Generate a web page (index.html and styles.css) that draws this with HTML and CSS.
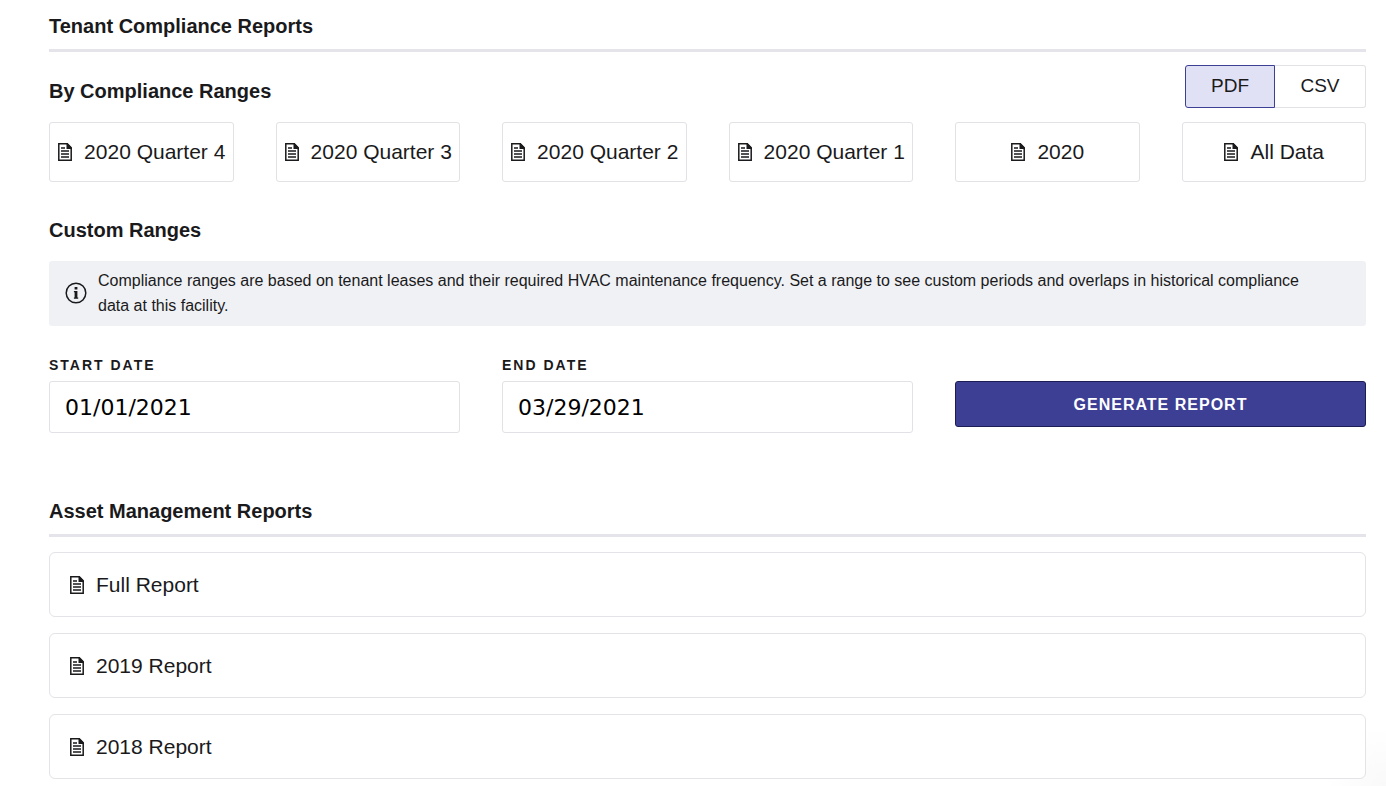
FILE: index.html
```html
<!DOCTYPE html>
<html lang="en">
<head>
<meta charset="utf-8">
<meta name="viewport" content="width=device-width, initial-scale=1">
<title>Reports</title>
<link rel="stylesheet" href="styles.css">
</head>
<body>
<svg class="sprite" aria-hidden="true">
  <symbol id="doc" viewBox="0 0 16 20">
    <path d="M1.8 1.8H10L14.2 6V18.2H1.8Z" fill="none" stroke="currentColor" stroke-width="1.5"/>
    <path d="M9.5 1H10.6L15 5.4V7H9.5Z" fill="currentColor"/>
    <path d="M4 6H8M4 9H12M4 12H12M4 15H12" fill="none" stroke="currentColor" stroke-width="1.4"/>
  </symbol>
</svg>
<main class="page">
  <section class="tenant">
    <h2 class="section-title">Tenant Compliance Reports</h2>
    <div class="range-head">
      <h3 class="subtitle">By Compliance Ranges</h3>
      <div class="toggle" role="group" aria-label="File format">
        <button type="button" class="toggle-option selected" aria-pressed="true">PDF</button>
        <button type="button" class="toggle-option" aria-pressed="false">CSV</button>
      </div>
    </div>
    <div class="ranges">
      <button type="button" class="range"><svg class="doc"><use href="#doc"/></svg><span>2020 Quarter 4</span></button>
      <button type="button" class="range"><svg class="doc"><use href="#doc"/></svg><span>2020 Quarter 3</span></button>
      <button type="button" class="range"><svg class="doc"><use href="#doc"/></svg><span>2020 Quarter 2</span></button>
      <button type="button" class="range"><svg class="doc"><use href="#doc"/></svg><span>2020 Quarter 1</span></button>
      <button type="button" class="range"><svg class="doc"><use href="#doc"/></svg><span>2020</span></button>
      <button type="button" class="range"><svg class="doc"><use href="#doc"/></svg><span>All Data</span></button>
    </div>
    <h3 class="subtitle custom-title">Custom Ranges</h3>
    <div class="info">
      <svg class="info-icon" viewBox="0 0 22 22" aria-hidden="true">
        <circle cx="11" cy="11" r="9.8" fill="none" stroke="currentColor" stroke-width="1.5"/>
        <path d="M9.6 5H12.4V7.5H9.6ZM8.9 9H12.4V15.4H13.2V16.8H8.9V15.4H9.6V10.3H8.9Z" fill="currentColor"/>
      </svg>
      <p class="info-text">Compliance ranges are based on tenant leases and their required HVAC maintenance frequency. Set a range to see custom periods and overlaps in historical compliance data at this facility.</p>
    </div>
    <form class="dates">
      <div class="field">
        <label class="label" for="start">START DATE</label>
        <input class="date" id="start" type="text" value="01/01/2021">
      </div>
      <div class="field">
        <label class="label" for="end">END DATE</label>
        <input class="date" id="end" type="text" value="03/29/2021">
      </div>
      <button type="button" class="generate">GENERATE REPORT</button>
    </form>
  </section>
  <section class="asset">
    <h2 class="section-title">Asset Management Reports</h2>
    <div class="reports">
      <a class="report" href="#full"><svg class="doc"><use href="#doc"/></svg><span>Full Report</span></a>
      <a class="report" href="#2019"><svg class="doc"><use href="#doc"/></svg><span>2019 Report</span></a>
      <a class="report" href="#2018"><svg class="doc"><use href="#doc"/></svg><span>2018 Report</span></a>
    </div>
  </section>
</main>
</body>
</html>
```
FILE: styles.css
```css
* {
  box-sizing: border-box;
}

body {
  margin: 0;
  background: #fff;
  color: #1a1a1c;
  font-family: "Liberation Sans", Arial, sans-serif;
}

button,
input {
  font: inherit;
  color: inherit;
  margin: 0;
}

.sprite {
  display: none;
}

.page {
  padding: 14px 20px 7px 49px;
  background: radial-gradient(circle at right bottom, #f9f9f9, #fff 60px);
}

.section-title,
.subtitle {
  margin: 0;
  font-size: 20px;
  line-height: 24px;
  font-weight: 700;
}

.section-title {
  padding-bottom: 11px;
  border-bottom: 3px solid #e4e4ea;
}

.range-head {
  display: flex;
  justify-content: space-between;
  align-items: center;
  margin-top: 13px;
}

.range-head .subtitle {
  padding-top: 8px;
}

.toggle {
  display: flex;
}

.toggle-option {
  width: 91px;
  height: 43px;
  padding: 0 0 2px;
  border: 1px solid #e1e1e6;
  border-left: 0;
  border-radius: 0 3px 3px 0;
  background: #fff;
  font-size: 19px;
}

.toggle-option.selected {
  width: 90px;
  border: 1px solid #3d3f94;
  border-radius: 3px 0 0 3px;
  background: #e1e1f6;
}

.ranges {
  display: grid;
  grid-template-columns: repeat(6, 1fr);
  gap: 42px;
  margin-top: 14px;
}

.range {
  display: flex;
  align-items: center;
  justify-content: center;
  gap: 11px;
  height: 60px;
  padding: 0;
  border: 1px solid #e1e1e6;
  border-radius: 3px;
  background: #fff;
  font-size: 21px;
  white-space: nowrap;
}

.doc {
  flex: none;
  width: 16px;
  height: 20px;
}

.custom-title {
  margin-top: 36px;
}

.info {
  display: flex;
  align-items: center;
  gap: 11px;
  margin-top: 19px;
  padding: 7px 42px 8px 16px;
  border-radius: 3px;
  background: #f0f1f4;
}

.info-icon {
  flex: none;
  width: 22px;
  height: 22px;
}

.info-text {
  margin: 0;
  font-size: 16px;
  line-height: 25px;
}

.dates {
  display: grid;
  grid-template-columns: repeat(3, 1fr);
  gap: 42px;
  margin-top: 30px;
}

.field {
  display: flex;
  flex-direction: column;
  gap: 7px;
}

.label {
  font-size: 14px;
  line-height: 18px;
  font-weight: 700;
  letter-spacing: 2px;
}

.date {
  width: 100%;
  height: 52px;
  padding: 0 15px;
  border: 1px solid #e1e1e6;
  border-radius: 3px;
  background: #fff;
  color: #000;
  font-family: "DejaVu Sans", sans-serif;
  font-size: 22px;
}

.generate {
  height: 46px;
  margin-top: 25px;
  padding: 2px 0 0;
  border: 1px solid #1d1d55;
  border-radius: 3px;
  background: #3d3f94;
  color: #fff;
  font-size: 16px;
  font-weight: 700;
  letter-spacing: 1px;
}

.asset {
  margin-top: 66px;
}

.reports {
  display: flex;
  flex-direction: column;
  gap: 16px;
  margin-top: 15px;
}

.report {
  display: flex;
  align-items: center;
  gap: 11px;
  height: 65px;
  padding: 0 19px;
  border: 1px solid #e3e3e8;
  border-radius: 6px;
  background: #fff;
  color: inherit;
  font-size: 21px;
  text-decoration: none;
}
```
